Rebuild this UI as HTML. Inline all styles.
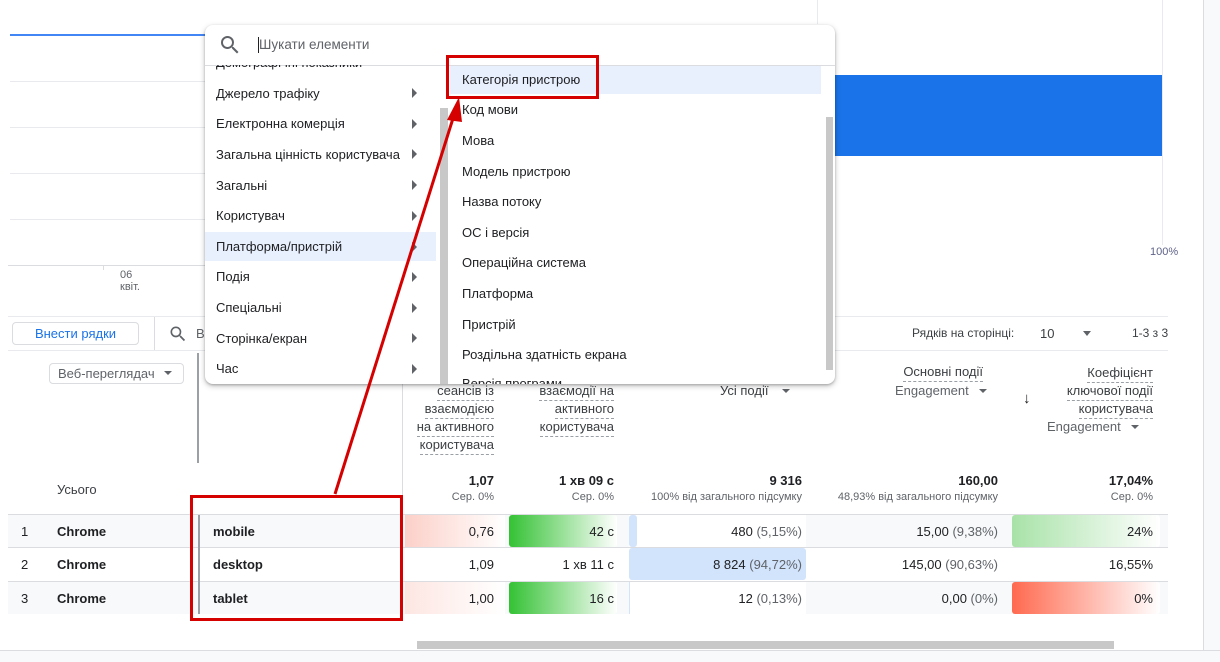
<!DOCTYPE html>
<html><head><meta charset="utf-8"><style>
*{box-sizing:border-box;margin:0;padding:0}
body{width:1220px;height:662px;overflow:hidden;background:#fff;font-family:"Liberation Sans",Arial,sans-serif;font-size:13px;color:#202124;position:relative}
.a{position:absolute;white-space:nowrap}
.hl{position:absolute;height:1px;background:#e8eaed}
.vl{position:absolute;width:1px;background:#dadce0}
.r{text-align:right}
.u{border-bottom:1px dashed #9aa0a6;padding-bottom:2px}
.g{color:#5f6368}
.sm{font-size:11px;color:#5f6368}
.mi{position:absolute;left:216px;font-size:13px;color:#202124}
.ar{position:absolute;left:412px;width:0;height:0;border-top:5px solid transparent;border-bottom:5px solid transparent;border-left:5px solid #5f6368}
.ri{position:absolute;left:462px;font-size:13px;color:#202124}
</style></head><body>
<!-- right strip -->
<div class="a" style="left:1203px;top:0;width:17px;height:662px;background:#f8f9fa;border-left:1px solid #dadce0"></div>
<div class="a" style="left:0;top:650px;width:1220px;height:12px;background:#f8f9fa;border-top:1px solid #dadce0"></div>
<!-- chart -->
<div class="a" style="left:10px;top:34px;width:200px;height:2px;background:#4285f4"></div>
<div class="hl" style="left:10px;top:81px;width:200px"></div>
<div class="hl" style="left:10px;top:127px;width:200px"></div>
<div class="hl" style="left:10px;top:173px;width:200px"></div>
<div class="hl" style="left:10px;top:219px;width:200px"></div>
<div class="hl" style="left:8px;top:265px;width:200px;background:#dadce0"></div>
<div class="vl" style="left:103px;top:265px;height:5px"></div>
<div class="a g" style="left:120px;top:269px;font-size:11px;line-height:12px">06<br>квіт.</div>
<div class="vl" style="left:817px;top:0;height:24px;background:#e8eaed"></div>
<div class="a" style="left:835px;top:75px;width:327px;height:81px;background:#1a73e8"></div>
<div class="vl" style="left:1162px;top:0;height:245px;background:#e8eaed"></div>
<div class="a" style="left:1150px;top:246px;font-size:11px;color:#5f6388">100%</div>
<!-- toolbar -->
<div class="hl" style="left:8px;top:316px;width:1160px"></div>
<div class="hl" style="left:8px;top:350px;width:1160px"></div>
<div class="a" style="left:12px;top:322px;width:127px;height:23px;border:1px solid #dadce0;border-radius:4px;color:#1a73e8;text-align:center;line-height:21px;font-weight:500">Внести рядки</div>
<div class="vl" style="left:154px;top:317px;height:33px"></div>
<svg class="a" style="left:168px;top:324px" width="20" height="20" viewBox="0 0 24 24"><path fill="#5f6368" d="M15.5 14h-.79l-.28-.27A6.47 6.47 0 0016 9.5 6.5 6.5 0 109.5 16c1.61 0 3.09-.59 4.23-1.57l.27.28v.79l5 4.99L20.49 19l-4.99-5zm-6 0C7.01 14 5 11.99 5 9.5S7.01 5 9.5 5 14 7.01 14 9.5 11.99 14 9.5 14z"/></svg>
<div class="a g" style="left:196px;top:326px">В</div>
<div class="a" style="left:912px;top:326px;font-size:12px;color:#3c4043">Рядків на сторінці:</div>
<div class="a" style="left:1040px;top:326px;color:#3c4043">10</div>
<div class="a" style="left:1083px;top:331px;border-left:4px solid transparent;border-right:4px solid transparent;border-top:5px solid #5f6368"></div>
<div class="a" style="left:1132px;top:326px;font-size:12px;color:#3c4043">1-3 з 3</div>
<!-- header -->
<div class="a" style="left:49px;top:363px;width:135px;height:21px;border:1px solid #dadce0;border-radius:4px;color:#5f6368;line-height:19px;padding-left:8px">Веб-переглядач</div>
<div class="a" style="left:164px;top:371px;border-left:4px solid transparent;border-right:4px solid transparent;border-top:4px solid #5f6368"></div>
<div class="a" style="left:197px;top:353px;width:2px;height:110px;background:#9aa0a6"></div>
<div class="vl" style="left:402px;top:350px;height:265px"></div>
<div class="a r" style="left:405px;top:382px;width:89px;line-height:18px;color:#3c4043"><span class="u">сеансів із</span><br><span class="u">взаємодією</span><br><span class="u">на активного</span><br><span class="u">користувача</span></div>
<div class="a r" style="left:505px;top:382px;width:109px;line-height:18px;color:#3c4043"><span class="u">взаємодії на</span><br><span class="u">активного</span><br><span class="u">користувача</span></div>
<div class="a" style="left:720px;top:383px;color:#3c4043">Усі події</div>
<div class="a" style="left:782px;top:389px;border-left:4px solid transparent;border-right:4px solid transparent;border-top:4px solid #5f6368"></div>
<div class="a r" style="left:860px;top:364px;width:123px;color:#3c4043"><span class="u">Основні події</span></div>
<div class="a" style="left:895px;top:383px;color:#5f6368">Engagement</div>
<div class="a" style="left:979px;top:389px;border-left:4px solid transparent;border-right:4px solid transparent;border-top:4px solid #5f6368"></div>
<div class="a" style="left:1023px;top:390px;font-size:15px;color:#202124">↓</div>
<div class="a r" style="left:1040px;top:364px;width:113px;line-height:18px;color:#3c4043"><span class="u">Коефіцієнт</span><br><span class="u">ключової події</span><br><span class="u">користувача</span></div>
<div class="a" style="left:1047px;top:419px;color:#5f6368">Engagement</div>
<div class="a" style="left:1131px;top:425px;border-left:4px solid transparent;border-right:4px solid transparent;border-top:4px solid #5f6368"></div>
<!-- totals -->
<div class="a" style="left:57px;top:482px;color:#3c4043">Усього</div>
<div class="a r" style="left:405px;top:473px;width:89px;font-weight:bold">1,07</div>
<div class="a r sm" style="left:405px;top:491px;width:89px">Сер. 0%</div>
<div class="a r" style="left:505px;top:473px;width:109px;font-weight:bold">1 хв 09 с</div>
<div class="a r sm" style="left:505px;top:491px;width:109px">Сер. 0%</div>
<div class="a r" style="left:630px;top:473px;width:172px;font-weight:bold">9 316</div>
<div class="a r sm" style="left:600px;top:491px;width:202px">100% від загального підсумку</div>
<div class="a r" style="left:810px;top:473px;width:188px;font-weight:bold">160,00</div>
<div class="a r sm" style="left:800px;top:491px;width:198px">48,93% від загального підсумку</div>
<div class="a r" style="left:1010px;top:473px;width:143px;font-weight:bold">17,04%</div>
<div class="a r sm" style="left:1010px;top:491px;width:143px">Сер. 0%</div>
<!-- rows -->
<div class="a" style="left:8px;top:515px;width:1160px;height:32px;background:#f8f9fa"></div>
<div class="a" style="left:8px;top:582px;width:1160px;height:32px;background:#f8f9fa"></div>
<div class="hl" style="left:8px;top:514px;width:1160px;background:#dadce0"></div>
<div class="hl" style="left:8px;top:547px;width:1160px;background:#dadce0"></div>
<div class="hl" style="left:8px;top:581px;width:1160px;background:#dadce0"></div>
<div class="a" style="left:198px;top:515px;width:2px;height:99px;background:#9aa0a6"></div>
<!-- row bg cells -->
<div class="a" style="left:405px;top:515px;width:100px;height:32px;background:linear-gradient(90deg,#fcd0c8,#fff)"></div>
<div class="a" style="left:405px;top:582px;width:100px;height:32px;background:linear-gradient(90deg,#fde6e2,#fff)"></div>
<div class="a" style="left:509px;top:515px;width:108px;height:32px;border-radius:3px;background:linear-gradient(90deg,#34c234,#fff)"></div>
<div class="a" style="left:509px;top:582px;width:108px;height:32px;border-radius:3px;background:linear-gradient(90deg,#34c234,#fff)"></div>
<div class="a" style="left:629px;top:515px;width:177px;height:32px;background:#fff"></div>
<div class="a" style="left:629px;top:515px;width:8px;height:32px;background:#d2e3fc;border-radius:3px"></div>
<div class="a" style="left:629px;top:548px;width:177px;height:32px;background:#d2e3fc;border-radius:3px"></div>
<div class="a" style="left:629px;top:582px;width:177px;height:32px;background:#fff;border-left:1px solid #d2e3fc"></div>
<div class="a" style="left:1012px;top:515px;width:148px;height:32px;border-radius:3px;background:linear-gradient(90deg,#a8e2a8,#fff)"></div>
<div class="a" style="left:1012px;top:582px;width:148px;height:32px;border-radius:3px;background:linear-gradient(90deg,#ff6a50,#fff)"></div>
<!-- row text -->
<div class="a" style="left:21px;top:524px">1</div><div class="a" style="left:57px;top:524px;font-weight:bold">Chrome</div><div class="a" style="left:213px;top:524px;font-weight:bold">mobile</div>
<div class="a" style="left:21px;top:557px">2</div><div class="a" style="left:57px;top:557px;font-weight:bold">Chrome</div><div class="a" style="left:213px;top:557px;font-weight:bold">desktop</div>
<div class="a" style="left:21px;top:591px">3</div><div class="a" style="left:57px;top:591px;font-weight:bold">Chrome</div><div class="a" style="left:213px;top:591px;font-weight:bold">tablet</div>
<div class="a r" style="left:405px;top:524px;width:89px">0,76</div>
<div class="a r" style="left:405px;top:557px;width:89px">1,09</div>
<div class="a r" style="left:405px;top:591px;width:89px">1,00</div>
<div class="a r" style="left:505px;top:524px;width:109px">42 с</div>
<div class="a r" style="left:505px;top:557px;width:109px">1 хв 11 с</div>
<div class="a r" style="left:505px;top:591px;width:109px">16 с</div>
<div class="a r" style="left:630px;top:524px;width:172px">480 <span class="g">(5,15%)</span></div>
<div class="a r" style="left:630px;top:557px;width:172px">8 824 <span class="g">(94,72%)</span></div>
<div class="a r" style="left:630px;top:591px;width:172px">12 <span class="g">(0,13%)</span></div>
<div class="a r" style="left:810px;top:524px;width:188px">15,00 <span class="g">(9,38%)</span></div>
<div class="a r" style="left:810px;top:557px;width:188px">145,00 <span class="g">(90,63%)</span></div>
<div class="a r" style="left:810px;top:591px;width:188px">0,00 <span class="g">(0%)</span></div>
<div class="a r" style="left:1010px;top:524px;width:143px">24%</div>
<div class="a r" style="left:1010px;top:557px;width:143px">16,55%</div>
<div class="a r" style="left:1010px;top:591px;width:143px">0%</div>
<!-- h scrollbar -->
<div class="a" style="left:417px;top:641px;width:697px;height:8px;background:#c8c8c8"></div>
<!-- dropdown -->
<div class="a" style="left:205px;top:25px;width:630px;height:359px;background:#fff;border-radius:8px;box-shadow:0 2px 6px rgba(0,0,0,.25),0 1px 2px rgba(0,0,0,.2);overflow:hidden">
<svg class="a" style="left:13px;top:8px" width="24" height="24" viewBox="0 0 24 24"><path fill="#5f6368" d="M15.5 14h-.79l-.28-.27A6.47 6.47 0 0016 9.5 6.5 6.5 0 109.5 16c1.61 0 3.09-.59 4.23-1.57l.27.28v.79l5 4.99L20.49 19l-4.99-5zm-6 0C7.01 14 5 11.99 5 9.5S7.01 5 9.5 5 14 7.01 14 9.5 11.99 14 9.5 14z"/></svg>
<div class="a" style="left:53px;top:12px;width:1px;height:16px;background:#202124"></div>
<div class="a" style="left:54px;top:12px;color:#5f6368;font-size:13.5px">Шукати елементи</div>
<div class="a" style="left:0;top:40px;width:630px;height:1px;background:#dadce0"></div>
<div class="a" style="left:11px;top:30px;color:#202124;font-size:13px">Демографічні показники</div>
<div class="a" style="left:0;top:30px;width:630px;height:10px;background:#fff"></div>
</div>
<div class="a" style="left:205px;top:232px;width:231px;height:29px;background:#e8f0fe"></div>
<div class="mi" style="top:86px">Джерело трафіку</div><div class="ar" style="top:88px"></div>
<div class="mi" style="top:116px">Електронна комерція</div><div class="ar" style="top:119px"></div>
<div class="mi" style="top:147px">Загальна цінність користувача</div><div class="ar" style="top:149px"></div>
<div class="mi" style="top:178px">Загальні</div><div class="ar" style="top:180px"></div>
<div class="mi" style="top:208px">Користувач</div><div class="ar" style="top:211px"></div>
<div class="mi" style="top:239px">Платформа/пристрій</div><div class="ar" style="top:242px"></div>
<div class="mi" style="top:269px">Подія</div><div class="ar" style="top:272px"></div>
<div class="mi" style="top:300px">Спеціальні</div><div class="ar" style="top:303px"></div>
<div class="mi" style="top:331px">Сторінка/екран</div><div class="ar" style="top:333px"></div>
<div class="mi" style="top:361px">Час</div><div class="ar" style="top:364px"></div>
<div class="a" style="left:440px;top:108px;width:8px;height:276px;background:#c8c8c8"></div>
<div class="a" style="left:450px;top:66px;width:371px;height:28px;background:#e8f0fe"></div>
<div class="ri" style="top:72px">Категорія пристрою</div>
<div class="ri" style="top:102px">Код мови</div>
<div class="ri" style="top:133px">Мова</div>
<div class="ri" style="top:164px">Модель пристрою</div>
<div class="ri" style="top:194px">Назва потоку</div>
<div class="ri" style="top:225px">ОС і версія</div>
<div class="ri" style="top:255px">Операційна система</div>
<div class="ri" style="top:286px">Платформа</div>
<div class="ri" style="top:317px">Пристрій</div>
<div class="ri" style="top:347px">Роздільна здатність екрана</div>
<div class="ri" style="top:377px;height:7px;overflow:hidden;line-height:14px">Версія програми</div>
<div class="a" style="left:826px;top:117px;width:7px;height:253px;background:#c8c8c8"></div>
<!-- annotations -->
<div class="a" style="left:446px;top:55px;width:153px;height:44px;border:3px solid #d50000"></div>
<div class="a" style="left:190px;top:495px;width:213px;height:126px;border:3px solid #d50000"></div>
<svg class="a" style="left:0;top:0" width="1220" height="662"><line x1="335" y1="494" x2="455" y2="112" stroke="#d50000" stroke-width="3"/><polygon points="459,97 447,120 462,122" fill="#d50000"/></svg>
</body></html>
